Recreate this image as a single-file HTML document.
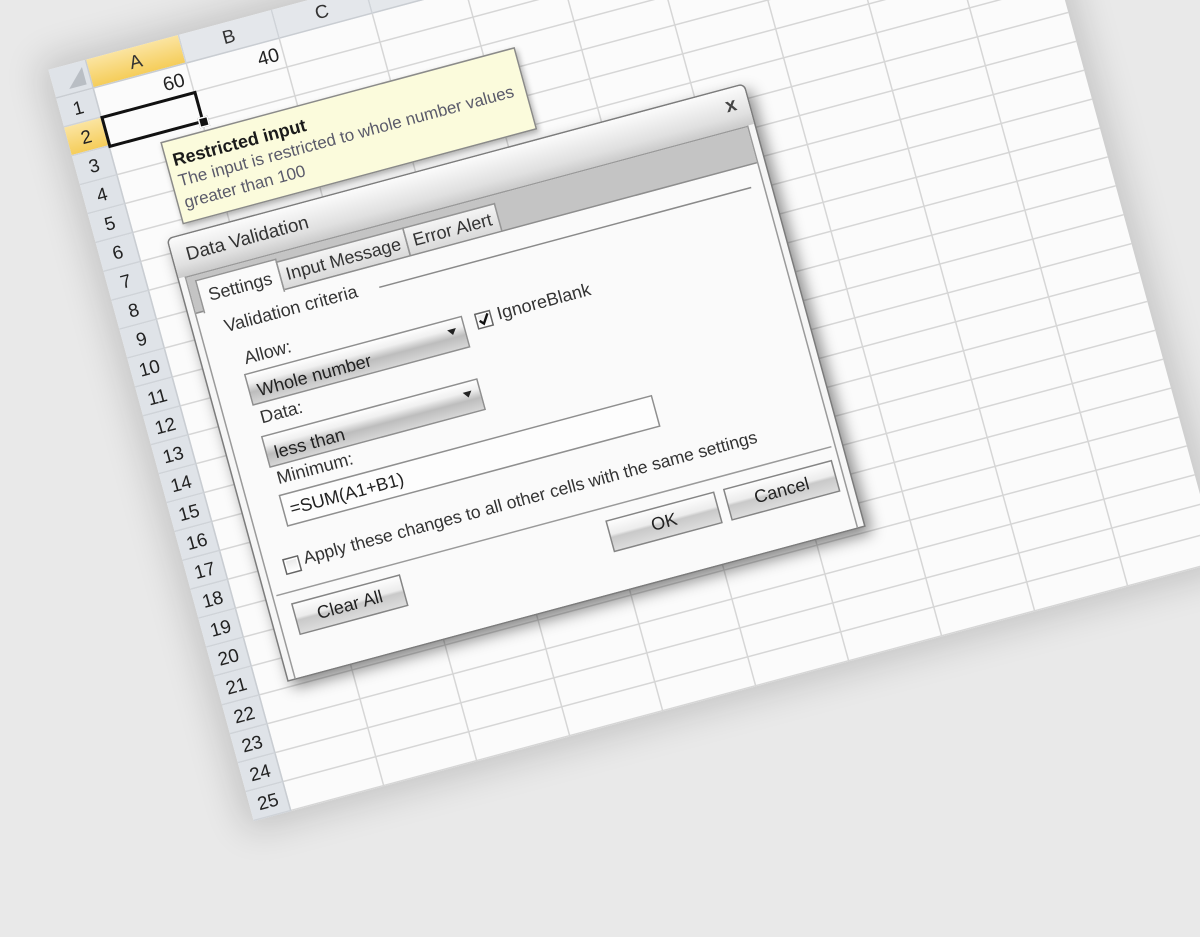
<!DOCTYPE html>
<html><head><meta charset="utf-8">
<style>
html,body{margin:0;padding:0;width:1200px;height:630px;overflow:hidden;background:#e9e9e9;font-family:"Liberation Sans",sans-serif;}
#w{position:absolute;left:0;top:0;width:800px;height:600px;transform-origin:0 0;transform:matrix(1.453,-0.39,0.395,1.445,48.4,69.8);}
#sheet{position:absolute;left:0;top:0;width:664px;height:520px;background:#fbfbfb;box-shadow:0 0 24px 6px rgba(0,0,0,0.16);}
#grid{position:absolute;left:26px;top:20px;width:638px;height:500px;
background-image:linear-gradient(to right,transparent 63px,#d6d6d6 63px),linear-gradient(to bottom,transparent 19px,#d6d6d6 19px);
background-size:64px 100%,100% 20px;}
.ch{position:absolute;top:0;height:19px;width:63px;background:#e4e7eb;border-right:1px solid #cfd3d8;border-bottom:1px solid #c9cdd2;text-align:center;font-size:12.5px;line-height:20px;color:#333;}
.rh{position:absolute;left:0;width:25px;height:19px;background:#dfe3e8;border-right:1px solid #c9cdd2;border-bottom:1px solid #cfd3d8;text-align:center;font-size:12.5px;line-height:20px;color:#222;}
.y{background:linear-gradient(#fbe4a0,#f5cd5a)!important;}
#corner{position:absolute;left:0;top:0;width:25px;height:19px;background:#dfe3e8;border-right:1px solid #c9cdd2;border-bottom:1px solid #c9cdd2;}
#corner:after{content:"";position:absolute;right:3px;bottom:3px;border-left:12px solid transparent;border-bottom:12px solid #b9bec4;}
.num{position:absolute;font-size:13px;color:#222;}
#sel{position:absolute;left:25px;top:39px;width:62px;height:18px;border:2px solid #111;}
#sel:after{content:"";position:absolute;right:-5px;bottom:-5px;width:5px;height:5px;background:#111;border:1px solid #fff;}
#tip{position:absolute;left:59px;top:66px;background:#fbfbdc;border:1px solid #8a8a8a;box-shadow:1px 2px 4px rgba(0,0,0,0.3);font-size:11.3px;line-height:15px;color:#5a5a6a;padding:0 0 0 4px;box-sizing:border-box;width:244px;height:57px;}
#tip b{display:block;color:#1a1a1a;font-size:12px;margin-top:6px;}
#dlg{position:absolute;left:46px;top:129px;width:396px;height:305px;background:#f6f6f6;border:1px solid #7c7c7c;border-radius:4px 4px 0 0;box-shadow:3px 5px 10px rgba(0,0,0,0.45);font-size:11.5px;color:#222;}
#tb{position:absolute;left:0;top:0;right:0;height:27px;background:linear-gradient(#fbfbfb,#e0e0e0 70%,#cbcbcb);border-radius:4px 4px 0 0;}
#tb .t{position:absolute;left:9px;top:6px;font-size:12.5px;color:#333;}
#tb .x{position:absolute;right:8px;top:3px;font-size:13px;font-weight:bold;color:#444;}
#inner{position:absolute;left:4px;right:4px;top:27px;bottom:0;border:1px solid #9a9a9a;border-bottom:none;background:#fafafa;}
#band{position:absolute;left:0;right:0;top:0;height:24px;background:#c4c4c4;border-bottom:1px solid #8e8e8e;}
.tab{position:absolute;top:5px;height:18px;background:linear-gradient(#f4f4f4,#dadada);border:1px solid #959595;border-bottom:none;font-size:12px;line-height:19px;text-align:center;color:#333;white-space:nowrap;}
.tab.s{top:3px;height:22px;background:#fafafa;line-height:23px;}
.lbl{position:absolute;font-size:12px;color:#333;white-space:nowrap;}
.line{position:absolute;height:1px;background:#8a8a8a;}
.cb{position:absolute;width:9px;height:9px;border:1px solid #666;background:linear-gradient(#e8e8e8,#fff);box-shadow:inset 0 0 0 1px #fff;}
.combo{position:absolute;height:20px;border:1px solid #8f8f8f;background:linear-gradient(#fefefe 0%,#f0f0f0 30%,#bdbdbd 60%,#d6d6d6 100%);}
.combo span{position:absolute;left:5px;bottom:1px;font-size:12px;color:#222;}
.combo i{position:absolute;right:5px;top:6px;width:0;height:0;border-left:3px solid transparent;border-right:3px solid transparent;border-top:4px solid #222;}
.tbx{position:absolute;border:1px solid #8f8f8f;background:#fdfdfd;}
.btn{position:absolute;width:73px;height:20px;border:1px solid #858585;background:linear-gradient(#fdfdfd,#ececec 45%,#c9c9c9 55%,#dcdcdc);text-align:center;line-height:21px;font-size:12px;color:#222;}
</style></head><body>
<div id="w">
<div id="sheet">
<div id="grid"></div>
<div id="corner"></div>
<div class="ch y" style="left:26px">A</div>
<div class="ch" style="left:90px">B</div>
<div class="ch" style="left:154px">C</div>
<div class="ch" style="left:218px"></div>
<div class="ch" style="left:282px"></div>
<div class="ch" style="left:346px"></div>
<div class="ch" style="left:410px"></div>
<div class="ch" style="left:474px"></div>
<div class="ch" style="left:538px"></div>
<div class="ch" style="left:602px;width:62px"></div>
<div class="rh" style="top:20px">1</div>
<div class="rh y" style="top:40px">2</div>
<div class="rh" style="top:60px">3</div>
<div class="rh" style="top:80px">4</div>
<div class="rh" style="top:100px">5</div>
<div class="rh" style="top:120px">6</div>
<div class="rh" style="top:140px">7</div>
<div class="rh" style="top:160px">8</div>
<div class="rh" style="top:180px">9</div>
<div class="rh" style="top:200px">10</div>
<div class="rh" style="top:220px">11</div>
<div class="rh" style="top:240px">12</div>
<div class="rh" style="top:260px">13</div>
<div class="rh" style="top:280px">14</div>
<div class="rh" style="top:300px">15</div>
<div class="rh" style="top:320px">16</div>
<div class="rh" style="top:340px">17</div>
<div class="rh" style="top:360px">18</div>
<div class="rh" style="top:380px">19</div>
<div class="rh" style="top:400px">20</div>
<div class="rh" style="top:420px">21</div>
<div class="rh" style="top:440px">22</div>
<div class="rh" style="top:460px">23</div>
<div class="rh" style="top:480px">24</div>
<div class="rh" style="top:500px">25</div>
<div class="num" style="left:71px;top:22px">60</div>
<div class="num" style="left:136px;top:22px">40</div>
<div id="sel"></div>
</div>

<div id="dlg">
<div id="tb"><span class="t">Data Validation</span><span class="x">x</span></div>
<div id="inner">
<div id="band">
<div class="tab s" style="left:5px;width:54px">Settings</div>
<div class="tab" style="left:60px;width:86px">Input Message</div>
<div class="tab" style="left:147px;width:62px">Error Alert</div>
</div>
<div class="lbl" style="left:16px;top:31px">Validation criteria</div>
<div class="line" style="left:122px;right:8px;top:39px"></div>
<div class="cb" style="left:178px;top:73px"><svg width="9" height="9" style="position:absolute;left:0;top:0"><path d="M1.5 4.5 L3.8 7 L7.8 1" stroke="#111" stroke-width="1.6" fill="none"/></svg></div>
<div class="lbl" style="left:193px;top:70px">IgnoreBlank</div>
<div class="lbl" style="left:23px;top:55px">Allow:</div>
<div class="combo" style="left:20px;top:72px;width:148px"><span>Whole number</span><i></i></div>
<div class="lbl" style="left:23px;top:96px">Data:</div>
<div class="combo" style="left:20px;top:115px;width:147px"><span>less than</span><i></i></div>
<div class="lbl" style="left:23px;top:138px">Minimum:</div>
<div class="tbx" style="left:21px;top:156px;width:255px;height:20px"><span class="lbl" style="left:4px;top:3px;color:#222">=SUM(A1+B1)</span></div>
<div class="cb" style="left:12px;top:198px"></div>
<div class="lbl" style="left:26px;top:195px;font-size:11.7px">Apply these changes to all other cells with the same settings</div>
<div class="line" style="left:2px;right:2px;top:220px;background:#9a9a9a"></div>
<div class="btn" style="left:10px;top:228px">Clear All</div>
<div class="btn" style="left:226px;top:229px">OK</div>
<div class="btn" style="left:307px;top:229px">Cancel</div>
</div>
</div>

<div id="tip"><b>Restricted input</b>The input is restricted to whole number values greater than 100</div>
</div>
</body></html>
